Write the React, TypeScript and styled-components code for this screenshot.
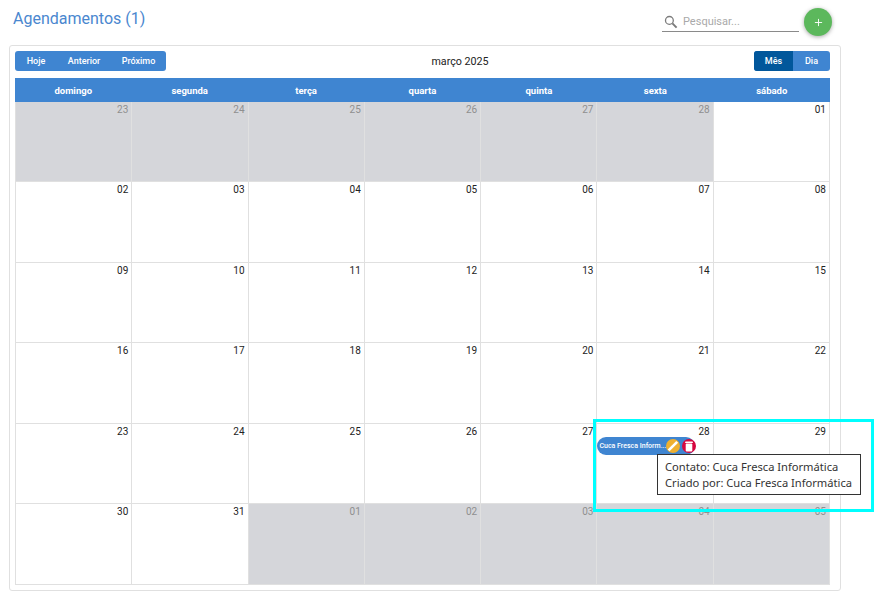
import React from 'react';
import styled, { createGlobalStyle } from 'styled-components';
import { Plus } from 'lucide-react';

const GlobalStyle = createGlobalStyle`
  html, body {
    margin: 0;
    background: #fff;
    font-family: Roboto, "Liberation Sans", sans-serif;
  }
  * { box-sizing: border-box; }
`;

const Page = styled.div`
  position: relative;
  width: 884px;
  height: 599px;
  padding: 0 43px 0 9px;
  overflow: hidden;
`;

const TopBar = styled.div`
  display: flex;
  justify-content: space-between;
  height: 45px;
  padding: 8px 9px 0 4px;
`;

const Title = styled.h1`
  margin: 0;
  font-size: 16px;
  line-height: 22px;
  font-weight: 400;
  color: #4a87cf;
`;

const Actions = styled.div`
  display: flex;
  align-items: flex-start;
  gap: 5px;
`;

const Search = styled.div`
  display: flex;
  align-items: center;
  width: 137px;
  height: 24px;
  padding: 4px 0 0 2px;
  gap: 5px;
  border-bottom: 1px solid #8a8a8a;
  font-size: 11px;
  color: #a9a9a9;
`;

const AddButton = styled.button`
  display: flex;
  align-items: center;
  justify-content: center;
  width: 28px;
  height: 28px;
  padding: 0;
  border: 0;
  border-radius: 50%;
  background: #5cb85c;
  color: #fff;
  box-shadow: 0 1px 4px rgba(0, 0, 0, 0.35);
`;

const Panel = styled.div`
  height: 546px;
  padding: 5px 10px 5px 5px;
  border: 1px solid #e0e0e0;
  border-radius: 3px;
`;

const Toolbar = styled.div`
  display: flex;
  align-items: center;
  justify-content: space-between;
  height: 20px;
  margin-bottom: 7px;
`;

const ButtonGroup = styled.div`
  display: flex;
  height: 20px;
  border-radius: 3px;
  overflow: hidden;
  background: #3f85d1;
`;

const ToolButton = styled.button<{ $active?: boolean; $width: number }>`
  width: ${(p) => p.$width}px;
  padding: 0;
  border: 0;
  background: ${(p) => (p.$active ? '#01579b' : 'transparent')};
  color: #fff;
  font-family: inherit;
  font-size: 9px;
  font-weight: 500;
`;

const MonthLabel = styled.div`
  font-size: 10.7px;
  color: #222;
`;

const WeekHeader = styled.div`
  display: grid;
  grid-template-columns: repeat(7, 1fr);
  height: 24px;
  background: #3f85d1;
`;

const WeekDay = styled.div`
  display: flex;
  align-items: center;
  justify-content: center;
  font-size: 9.5px;
  font-weight: 700;
  color: #fff;
`;

const MonthGrid = styled.div`
  display: grid;
  grid-template-columns: repeat(7, 1fr);
  grid-template-rows: 80px 81px 80px 81px 80px 80px;
  border-right: 1px solid #e0e0e0;
  border-bottom: 1px solid #e0e0e0;
`;

const DayCell = styled.div<{ $outside?: boolean }>`
  position: relative;
  padding: 2px 3px 0 0;
  border-left: 1px solid #e0e0e0;
  border-bottom: 1px solid #e0e0e0;
  background: ${(p) => (p.$outside ? '#d5d6da' : '#fff')};
  &:nth-last-child(-n + 7) { border-bottom: 0; }
`;

const DayNumber = styled.div<{ $outside?: boolean }>`
  text-align: right;
  font-size: 10px;
  line-height: 12px;
  color: ${(p) => (p.$outside ? '#8f8f8f' : '#222')};
`;

const EventPill = styled.div`
  position: absolute;
  top: 13px;
  left: 0;
  display: flex;
  align-items: center;
  width: 98px;
  height: 18px;
  padding-left: 2px;
  border-radius: 9px;
  background: #3f85d1;
  color: #fff;
  font-size: 7px;
  font-weight: 500;
  white-space: nowrap;
`;

const EventTitle = styled.span`
  width: 70px;
`;

const EventIcon = styled.span<{ $color: string }>`
  display: flex;
  align-items: center;
  justify-content: center;
  flex: none;
  width: 14px;
  height: 14px;
  margin-right: 2px;
  border-radius: 50%;
  background: ${(p) => p.$color};
`;

const Tooltip = styled.div`
  position: absolute;
  top: 454px;
  left: 657px;
  z-index: 2;
  width: 204px;
  height: 41px;
  padding: 4px 7px;
  border: 1px solid #333;
  background: #fff;
  font-family: "Noto Sans", sans-serif;
  font-size: 11.15px;
  line-height: 16px;
  color: #333;
  white-space: nowrap;
`;

const Highlight = styled.div`
  position: absolute;
  top: 419px;
  left: 593px;
  z-index: 3;
  width: 281px;
  height: 93px;
  border: 3px solid #0ff;
  pointer-events: none;
`;

const SearchIcon = () => (
  <svg width="14" height="14" viewBox="0 0 14 14" fill="none" stroke="#7b7b7b" strokeWidth="1.3">
    <circle cx="5.4" cy="5.4" r="3.9" />
    <path d="M8.4 8.4 12.6 12.6" strokeWidth="2" />
  </svg>
);

const PencilIcon = () => (
  <svg width="12" height="12" viewBox="0 0 12 12" fill="none">
    <path d="M1.6 10.4 10.2 1.8" stroke="#fff" strokeWidth="2.6" />
  </svg>
);

const TrashIcon = () => (
  <svg width="10" height="11" viewBox="0 0 10 11">
    <path d="M1.5 .5h7l.5 1.5H1Z" fill="#fff" />
    <rect x="1.7" y="2.4" width="6.6" height="8" rx="1" fill="#fff" />
  </svg>
);

const weekDays = ['domingo', 'segunda', 'terça', 'quarta', 'quinta', 'sexta', 'sábado'];

const days = [
  ...[23, 24, 25, 26, 27, 28].map((n) => ({ label: String(n), outside: true })),
  ...Array.from({ length: 31 }, (_, i) => ({ label: String(i + 1).padStart(2, '0'), outside: false })),
  ...[1, 2, 3, 4, 5].map((n) => ({ label: String(n).padStart(2, '0'), outside: true })),
];

const App: React.FC = () => (
  <Page>
    <GlobalStyle />
    <TopBar>
      <Title>Agendamentos (1)</Title>
      <Actions>
        <Search>
          <SearchIcon />
          Pesquisar...
        </Search>
        <AddButton>
          <Plus size={11} strokeWidth={2} />
        </AddButton>
      </Actions>
    </TopBar>
    <Panel>
      <Toolbar>
        <ButtonGroup>
          <ToolButton $width={42}>Hoje</ToolButton>
          <ToolButton $width={54}>Anterior</ToolButton>
          <ToolButton $width={55}>Próximo</ToolButton>
        </ButtonGroup>
        <MonthLabel>março 2025</MonthLabel>
        <ButtonGroup>
          <ToolButton $active $width={39}>Mês</ToolButton>
          <ToolButton $width={37}>Dia</ToolButton>
        </ButtonGroup>
      </Toolbar>
      <WeekHeader>
        {weekDays.map((d) => (
          <WeekDay key={d}>{d}</WeekDay>
        ))}
      </WeekHeader>
      <MonthGrid>
        {days.map((d, i) => (
          <DayCell key={i} $outside={d.outside}>
            <DayNumber $outside={d.outside}>{d.label}</DayNumber>
            {i === 33 && (
              <EventPill>
                <EventTitle>Cuca Fresca Inform...</EventTitle>
                <EventIcon $color="#efb030">
                  <PencilIcon />
                </EventIcon>
                <EventIcon $color="#d6063f">
                  <TrashIcon />
                </EventIcon>
              </EventPill>
            )}
          </DayCell>
        ))}
      </MonthGrid>
    </Panel>
    <Tooltip>
      Contato: Cuca Fresca Informática
      <br />
      Criado por: Cuca Fresca Informática
    </Tooltip>
    <Highlight />
  </Page>
);

export default App;
